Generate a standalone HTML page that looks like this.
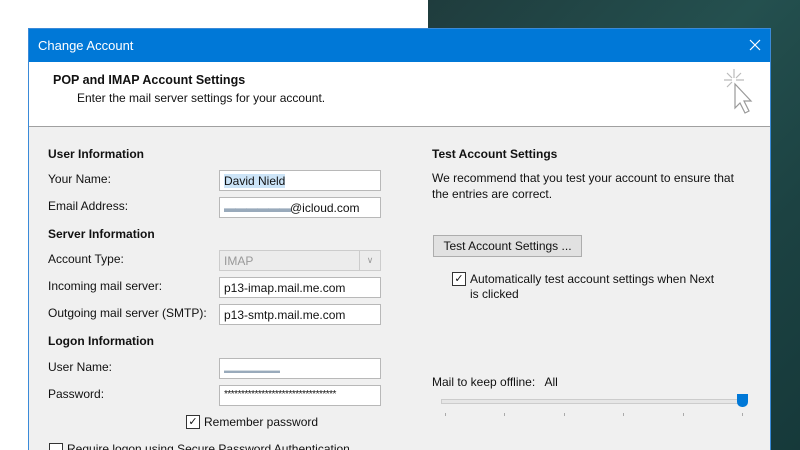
<!DOCTYPE html>
<html style="overflow:hidden;height:450px"><head><style>
body{margin:0;width:800px;height:450px;overflow:hidden;position:relative;font-family:"Liberation Sans",sans-serif;font-size:12px;color:#111;background:#fff}
.bg{position:absolute;left:428px;top:0;width:372px;height:450px;background:linear-gradient(135deg,#1f3c3d,#24504f 40%,#1c4242 70%,#16393a)}
.dlg{position:absolute;left:28px;top:28px;width:743px;height:422px;background:#f0f0f0;border:1px solid #3a8ad8;border-bottom:none;box-sizing:border-box;overflow:hidden}
.tb{position:absolute;left:0;top:0;right:0;height:33px;background:#0078d7;color:#fff;font-size:13px}
.hd{position:absolute;left:0;top:33px;right:0;height:64px;background:#fff;border-bottom:1px solid #a0a0a0}
.a{position:absolute;white-space:nowrap}
b{font-weight:bold}
.in{position:absolute;left:190px;width:162px;height:21px;background:#fff;border:1px solid #b8b8b8;box-sizing:border-box;padding:3px 4px;font-size:12px}
.cb{position:absolute;width:12px;height:12px;border:1px solid #333;background:#fff;font-size:11px;line-height:12px;text-align:center}
.tick{position:absolute;top:384px;width:1px;height:3px;background:#aaa}
</style></head><body>
<div class="bg"></div>
<div class="dlg">
<div class="tb"><span class="a" style="left:9px;top:9px">Change Account</span><svg class="a" style="left:720px;top:10px" width="12" height="12" viewBox="0 0 12 12"><path d="M1 1L11 11M11 1L1 11" stroke="#fff" stroke-width="1.2"/></svg></div>
<div class="hd">
<b class="a" style="left:24px;top:11px;font-size:12.5px">POP and IMAP Account Settings</b>
<span class="a" style="left:48px;top:29px">Enter the mail server settings for your account.</span>
<svg class="a" style="left:690px;top:5px" width="40" height="56" viewBox="0 0 40 56"><g stroke="#bbb" stroke-width="1.2" fill="none"><path d="M15 2v9M5 13h8M17 13h8M8 6l5 5M22 6l-5 5M8 20l5-5"/><path d="M16 17v24l5-5 5 10 4-2-5-10h7z" stroke="#999"/></g></svg>
</div>
<b class="a" style="left:19px;top:118px">User Information</b>
<span class="a" style="left:19px;top:143px">Your Name:</span>
<div class="in" style="top:141px"><span style="background:#cce4f7">David Nield</span></div>
<span class="a" style="left:19px;top:170px">Email Address:</span>
<div class="in" style="top:168px"><span style="color:#9ab;letter-spacing:-1px">▬▬▬▬▬▬</span>@icloud.com</div>
<b class="a" style="left:19px;top:198px">Server Information</b>
<span class="a" style="left:19px;top:223px">Account Type:</span>
<div class="in" style="top:221px;background:#ececec;border-color:#ccc;color:#999">IMAP<span style="position:absolute;right:0;top:0;width:20px;height:19px;border-left:1px solid #ccc;text-align:center;font-size:9px;line-height:19px">∨</span></div>
<span class="a" style="left:19px;top:250px">Incoming mail server:</span>
<div class="in" style="top:248px">p13-imap.mail.me.com</div>
<span class="a" style="left:19px;top:277px">Outgoing mail server (SMTP):</span>
<div class="in" style="top:275px">p13-smtp.mail.me.com</div>
<b class="a" style="left:19px;top:305px">Logon Information</b>
<span class="a" style="left:19px;top:331px">User Name:</span>
<div class="in" style="top:329px"><span style="color:#9ab;font-size:8px">▬▬▬▬▬▬▬</span></div>
<span class="a" style="left:19px;top:358px">Password:</span>
<div class="in" style="top:356px;overflow:hidden;font-size:10px;letter-spacing:-0.5px">*********************************</div>
<div class="cb" style="left:157px;top:386px">✓</div><span class="a" style="left:175px;top:386px">Remember password</span>
<div class="cb" style="left:20px;top:414px"></div><span class="a" style="left:38px;top:413px">Require logon using Secure Password Authentication</span>
<b class="a" style="left:403px;top:118px">Test Account Settings</b>
<span class="a" style="left:403px;top:142px">We recommend that you test your account to ensure that</span>
<span class="a" style="left:403px;top:158px">the entries are correct.</span>
<div class="a" style="left:404px;top:206px;width:149px;height:22px;background:#e1e1e1;border:1px solid #adadad;box-sizing:border-box;text-align:center;line-height:20px">Test Account Settings ...</div>
<div class="cb" style="left:423px;top:243px">✓</div>
<span class="a" style="left:441px;top:243px">Automatically test account settings when Next</span>
<span class="a" style="left:441px;top:258px">is clicked</span>
<span class="a" style="left:403px;top:346px">Mail to keep offline:&nbsp;&nbsp; All</span>
<div class="a" style="left:412px;top:370px;width:300px;height:3px;background:#e6e6e6;border:1px solid #ccc"></div>
<div class="a" style="left:708px;top:365px;width:11px;height:13px;background:#0078d7;border-radius:0 0 5px 5px"></div>
<div class="tick" style="left:416px"></div><div class="tick" style="left:475px"></div><div class="tick" style="left:535px"></div><div class="tick" style="left:594px"></div><div class="tick" style="left:654px"></div><div class="tick" style="left:713px"></div>
</div>
</body></html>
